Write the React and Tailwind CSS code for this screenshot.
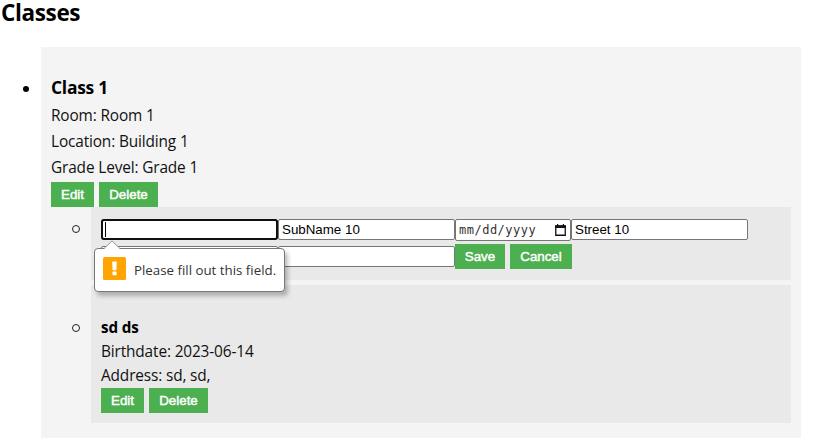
function Button({ children, className = '' }) {
  return (
    <button
      className={`h-[25px] shrink-0 bg-[#4caf50] text-center font-['Liberation_Sans',sans-serif] text-[13.333px] leading-[25px] whitespace-nowrap text-white [-webkit-text-stroke:0.45px_white] ${className}`}
    >
      {children}
    </button>
  );
}

function Field({ value = '', className = '' }) {
  return (
    <input
      readOnly
      defaultValue={value}
      className={`block h-[21px] w-[177px] shrink-0 rounded-[2px] border border-[#767676] bg-white px-[3px] font-['Liberation_Sans',sans-serif] text-[13.333px] leading-[15px] text-black outline-none ${className}`}
    />
  );
}

function DateField() {
  return (
    <div className="flex h-[22px] w-[116px] shrink-0 items-center justify-between rounded-[2px] border border-[#767676] bg-white pr-[4px] pl-[3px]">
      <span className="font-['DejaVu_Sans_Mono',monospace] text-[12px] leading-5 tracking-[0.5px] text-[#333]">mm/dd/yyyy</span>
      <svg className="mb-px" width="11" height="12" viewBox="0 0 11 12">
        <path d="M0.75 2h9.5v9.25h-9.5z" fill="none" stroke="#111" strokeWidth="1.3" />
        <path d="M0 1.5h11v2.5H0zM2 0h1.2v2H2zM7.8 0h1.2v2H7.8z" fill="#111" />
      </svg>
    </div>
  );
}

function ValidationBubble() {
  return (
    <div className="absolute top-[29px] left-[-7px] z-10 flex h-[44px] w-[191px] items-center rounded-[4px] border border-[#777] bg-white pl-2 shadow-[3px_4px_4px_rgba(0,0,0,0.25)]">
      <svg className="absolute top-[-9px] left-[8px]" width="18" height="10" viewBox="0 0 18 10">
        <path d="M0 10 L1 9 L9 1 L17 9 L18 10Z" fill="#fff" />
        <path d="M1 8.5 L9 1 L17 8.5" fill="none" stroke="#999" strokeWidth="1" />
      </svg>
      <svg className="mt-[-3px] shrink-0" width="23" height="23" viewBox="0 0 23 23">
        <rect width="23" height="23" rx="1.5" fill="#ffa400" />
        <path d="M9.2 4.5h4.6l-.4 8.7H9.6z" fill="#fff" />
        <rect x="9.4" y="14.5" width="4.2" height="3.7" rx="1" fill="#fff" />
      </svg>
      <span className="ml-[8px] text-[13.3px] leading-5 whitespace-nowrap text-[#333]">
        Please fill out this field.
      </span>
    </div>
  );
}

export default function App() {
  return (
    <main className="h-[445px] w-[835px] bg-white font-['Open_Sans','Noto_Sans',sans-serif] text-[#111]">
      <h2 className="h-[47px] pl-px text-[22.5px] leading-[26px] font-bold tracking-[-0.35px] text-black">Classes</h2>
      <ul className="flex">
        <li className="flex">
          <div className="w-[41px] shrink-0 pt-[39px] pl-[23px]">
            <div className="size-[6px] rounded-full bg-black" />
          </div>
          <section className="h-[391px] w-[760px] bg-[#f4f4f4] px-[10px] pt-[27px]">
            <h3 className="h-[29px] text-[17.4px] leading-[26px] font-bold tracking-[-0.25px] text-black">Class 1</h3>
            <div className="text-[15.4px] leading-[26px] tracking-[-0.14px]">
              <p>Room: Room 1</p>
              <p>Location: Building 1</p>
              <p>Grade Level: Grade 1</p>
            </div>
            <div className="mt-px flex gap-[5px]">
              <Button className="w-[43px]">Edit</Button>
              <Button className="w-[59px]">Delete</Button>
            </div>

            <ul className="flex flex-col gap-[5px]">
              <li className="flex">
                <div className="w-[40px] shrink-0 pt-[18px] pl-[21px]">
                  <div className="size-[8px] rounded-full border-[1.5px] border-[#222]" />
                </div>
                <div className="h-[73px] w-[700px] bg-[#e9e9e9] px-[10px] pt-[12px]">
                  <div className="relative flex h-[25px] items-start">
                    <Field className="rounded-[3px] outline-[2px] outline-offset-[-2px] outline-[#101010] outline-solid" />
                    <div className="absolute top-[3px] left-[4px] h-[15px] w-px bg-black" />
                    <Field value="SubName 10" />
                    <DateField />
                    <Field value="Street 10" />
                    <ValidationBubble />
                  </div>
                  <div className="flex h-[25px] items-center">
                    <Field />
                    <Field />
                    <Button className="w-[50px]">Save</Button>
                    <Button className="ml-[5px] w-[62px]">Cancel</Button>
                  </div>
                </div>
              </li>
              <li className="flex">
                <div className="w-[40px] shrink-0 pt-[39px] pl-[21px]">
                  <div className="size-[8px] rounded-full border-[1.5px] border-[#222]" />
                </div>
                <div className="h-[138px] w-[700px] bg-[#e9e9e9] px-[10px] pt-[30px]">
                  <h4 className="h-[25px] text-[15.2px] leading-[24px] font-bold tracking-[-0.1px] text-black">sd ds</h4>
                  <div className="h-[48px] text-[15.4px] leading-[24px] tracking-[-0.14px]">
                    <p>Birthdate: 2023-06-14</p>
                    <p>Address: sd, sd,</p>
                  </div>
                  <div className="flex gap-[5px]">
                    <Button className="w-[43px]">Edit</Button>
                    <Button className="w-[59px]">Delete</Button>
                  </div>
                </div>
              </li>
            </ul>
          </section>
        </li>
      </ul>
    </main>
  );
}
